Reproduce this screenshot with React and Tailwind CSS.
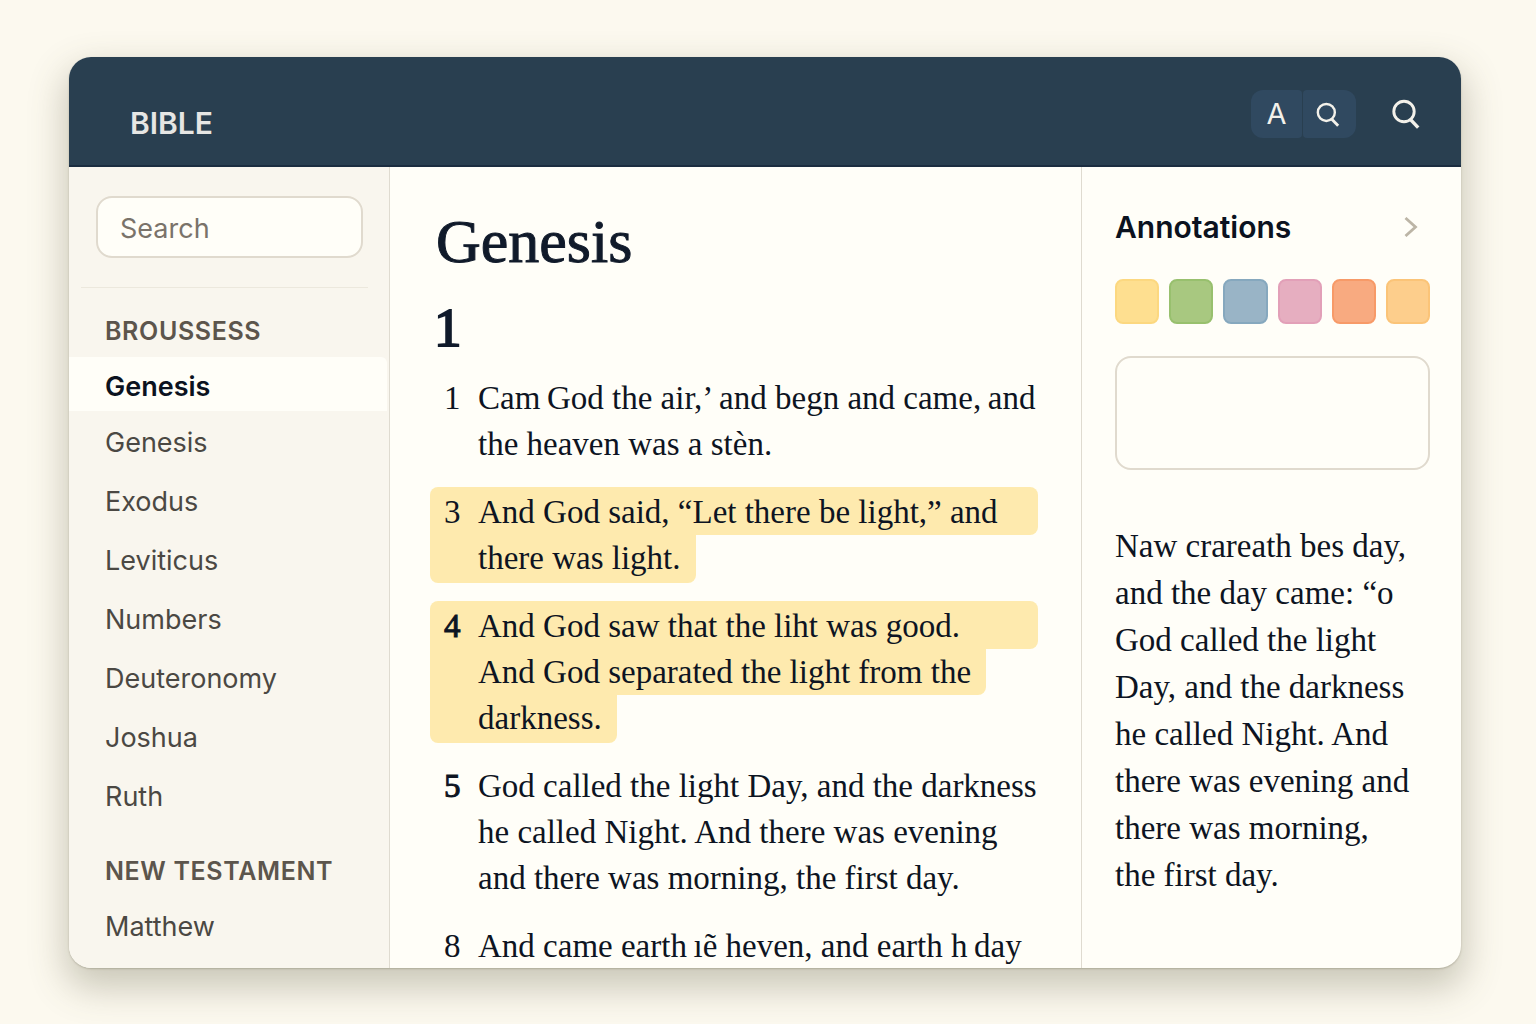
import React from "react";

const SERIF = "font-['Liberation_Serif','Times_New_Roman',serif]";

const books = ["Genesis", "Exodus", "Leviticus", "Numbers", "Deuteronomy", "Joshua", "Ruth"];

const verses = [
  { n: "1", lines: ["Cam\u2009God the air,’ and begn and came,\u2009and", "the heaven was a stèn."] },
  { n: "3", marked: true, lines: ["And God said, “Let there be light,” and", "there was light."] },
  {
    n: "4",
    marked: true,
    strong: true,
    lines: ["And God saw that the liht was good.", "And God separated the light from the", "darkness."],
  },
  {
    n: "5",
    strong: true,
    lines: [
      "God called the light Day, and the darkness",
      "he called Night. And there was evening",
      "and there was morning, the first day.",
    ],
  },
  { n: "8", lines: ["And came earth\u2009ıẽ heven, and earth h\u2009day"] },
];

const swatches = [
  { name: "Yellow", cls: "bg-[#fedf90] border-[#fcd880]" },
  { name: "Green", cls: "bg-[#a8c880] border-[#98c06e]" },
  { name: "Blue", cls: "bg-[#99b4c6] border-[#86a8be]" },
  { name: "Pink", cls: "bg-[#e6aec0] border-[#e2a0b8]" },
  { name: "Coral", cls: "bg-[#f8aa80] border-[#f79a68]" },
  { name: "Orange", cls: "bg-[#fdce8c] border-[#fbc478]" },
];

function Magnifier({ className }) {
  return (
    <svg viewBox="0 0 28 30" className={className} fill="none" stroke="currentColor" aria-hidden="true">
      <circle cx="12" cy="12.5" r="10.2" strokeWidth="2.9" />
      <path d="M18 20 26.2 28.6" strokeWidth="3.4" />
    </svg>
  );
}

function Header() {
  return (
    <header className="flex h-[110px] items-center justify-between border-b-2 border-[#1b2d40] bg-[#293f50] pr-[41px] pl-[61px] text-[#f3f1ea]">
      <h1 className="pt-6 text-[30px] leading-9 font-semibold text-[#e6e6e4]">BIBLE</h1>
      <div className="flex items-center gap-9 pt-1.5">
        <div className="flex gap-px">
          <button aria-label="Text size" className="flex h-12 w-[51px] items-center justify-center rounded-l-xl rounded-r-sm bg-[#304960] text-[29px]">
            A
          </button>
          <button aria-label="Quick find" className="flex h-12 w-[53px] items-center justify-center rounded-l-sm rounded-r-xl bg-[#304960] pr-1">
            <Magnifier className="h-[25px] w-6" />
          </button>
        </div>
        <button aria-label="Search the text" className="flex h-12 items-center">
          <Magnifier className="h-[30px] w-7" />
        </button>
      </div>
    </header>
  );
}

function Sidebar() {
  return (
    <nav aria-label="Books" className="w-[321px] shrink-0 border-r border-[#dfdbd0] bg-[#f9f6ee] text-[27px] text-[#4b4843]">
      <div className="pt-[29px] pr-[26px] pl-[27px]">
        <input
          type="search"
          aria-label="Search books"
          placeholder="Search"
          className="block h-[62px] w-full rounded-2xl border-2 border-[#e0dace] bg-[#fffef8] px-[22px] pt-0.5 text-[27px] outline-none placeholder:text-[#7a736a]"
        />
      </div>
      <hr className="mt-[29px] mr-[21px] ml-3 border-[#ece8dd]" />
      <h2 className="px-9 pt-[25px] pb-2 text-[25px] leading-9 font-semibold tracking-wide text-[#5c554c]">BROUSSESS</h2>
      <a href="#genesis" aria-current="page" className="mr-0.5 block h-[54px] rounded-tr-md bg-[#fffef8] px-9 pt-[3px] leading-[54px] font-semibold text-[#0b1220]">
        Genesis
      </a>
      <ul className="pt-0.5">
        {books.map((b) => (
          <li key={b}>
            <a href={"#" + b.toLowerCase()} className="block px-9 leading-[59px]">
              {b}
            </a>
          </li>
        ))}
      </ul>
      <h2 className="px-9 pt-[27px] text-[25px] leading-9 font-semibold tracking-wide text-[#5c554c]">NEW TESTAMENT</h2>
      <a href="#matthew" className="mt-2 block px-9 pb-3 leading-[59px]">
        Matthew
      </a>
    </nav>
  );
}

function Verse({ verse }) {
  const { n, lines, marked, strong } = verse;
  const last = lines.length - 1;
  return (
    <p className="flex flex-col items-start">
      {lines.map((line, i) => (
        <span
          key={i}
          className={[
            "flex pl-[14px] leading-[46px] whitespace-nowrap",
            i === 0 ? "w-full rounded-t-lg pt-0.5" : "pr-[15px]",
            i === last ? "rounded-b-lg pb-0.5" : "rounded-br-lg",
            marked ? "bg-[#feeaae]" : "",
          ].join(" ")}
        >
          <span className={strong ? "w-[34px] shrink-0 [-webkit-text-stroke:1px]" : "w-[34px] shrink-0"}>{i === 0 ? n : ""}</span>
          <span>{line}</span>
        </span>
      ))}
    </p>
  );
}

function Reader() {
  return (
    <main className={"min-w-0 flex-1 overflow-hidden pt-10 pr-[43px] pl-10 text-[33px] text-[#0d1422] " + SERIF}>
      <h2 className="pl-1.5 text-[62px] leading-[68px] text-[#101a2a] [-webkit-text-stroke:1px]">Genesis</h2>
      <h3 className="pt-[21px] pb-[13px] pl-1 text-[55px] leading-[64px] text-[#101a2a] [-webkit-text-stroke:2px]">1</h3>
      <div className="-mb-[3px] flex flex-col gap-[18px]">
        {verses.map((v) => (
          <Verse key={v.n} verse={v} />
        ))}
      </div>
    </main>
  );
}

function Annotations() {
  return (
    <aside className="w-[380px] shrink-0 border-l border-[#dfdbd0] pt-10 pr-[31px] pl-[33px]">
      <div className="flex items-center justify-between">
        <h2 className="text-[30px] leading-10 font-semibold text-[#0b1220]">Annotations</h2>
        <button aria-label="Collapse annotations" className="pr-3 text-[#bcb5a6]">
          <svg viewBox="0 0 14 20" className="h-5 w-[14px]" fill="none" stroke="currentColor" strokeWidth="2.8" aria-hidden="true">
            <path d="M1.5 1 11.5 10 1.5 19" />
          </svg>
        </button>
      </div>
      <div className="mt-8 grid grid-cols-6 gap-[10px]">
        {swatches.map((s) => (
          <button key={s.name} aria-label={s.name} className={"h-[45px] rounded-lg border-2 " + s.cls} />
        ))}
      </div>
      <textarea
        aria-label="Note"
        className="mt-8 block h-[114px] w-full resize-none rounded-2xl border-2 border-[#e0dace] bg-transparent p-3 text-xl outline-none"
      />
      <p className={"mt-[53px] text-[33px] leading-[47px] whitespace-nowrap text-[#0d1422] " + SERIF}>
        Naw crareath bes day,
        <br />
        and the day came: “o
        <br />
        God called the light
        <br />
        Day, and the darkness
        <br />
        he called Night. And
        <br />
        there was evening and
        <br />
        there was morning,
        <br />
        the first day.
      </p>
    </aside>
  );
}

export default function App() {
  return (
    <div className="min-h-screen bg-[#fcf9ef] pt-[57px] pr-[75px] pb-14 pl-[69px] font-['Inter',sans-serif]">
      <div className="overflow-hidden rounded-[22px] bg-[#fffef8] shadow-[0_16px_36px_4px_rgba(90,85,60,0.3),0_1px_2px_rgba(90,85,60,0.3)]">
        <Header />
        <div className="flex">
          <Sidebar />
          <Reader />
          <Annotations />
        </div>
      </div>
    </div>
  );
}
